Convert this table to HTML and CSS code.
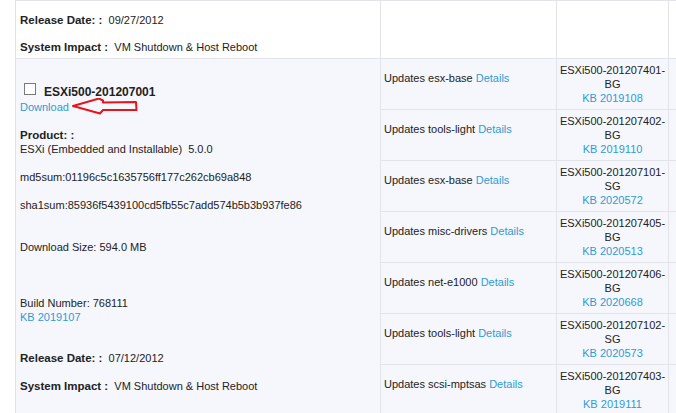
FILE: index.html
```html
<!DOCTYPE html>
<html>
<head>
<meta charset="utf-8">
<link rel="stylesheet" href="styles.css">
</head>
<body>
<table class="grid">
  <colgroup>
    <col class="c1"><col class="c2"><col class="c3"><col class="c4">
  </colgroup>
  <tr class="first">
    <td class="main top">
      <div class="meta"><b>Release Date: :</b>&nbsp; 09/27/2012</div>
      <div class="meta gap"><b>System Impact :</b>&nbsp; VM Shutdown &amp; Host Reboot</div>
    </td>
    <td></td><td></td><td></td>
  </tr>
  <tr class="sub">
    <td class="main bundle" rowspan="7">
      <div class="head"><span class="box"></span><b>ESXi500-201207001</b></div>
      <div class="line"><a href="#">Download</a></div>
      <svg class="arrow" width="80" height="24" viewBox="0 0 80 24"><path d="M2 8 L28 0.5 L32 2.5 L32 4.5 L65 4 L65.5 12 L32 12 L29 15.5 Z" fill="none" stroke="#e8141c" stroke-width="2" stroke-linejoin="round"/></svg>
      <div class="line lab sp1"><b>Product: :</b></div>
      <div class="line">ESXi (Embedded and Installable)&nbsp; 5.0.0</div>
      <div class="line sp2">md5sum:01196c5c1635756ff177c262cb69a848</div>
      <div class="line sp2">sha1sum:85936f5439100cd5fb55c7add574b5b3b937fe86</div>
      <div class="line sp3">Download Size: 594.0 MB</div>
      <div class="line sp4">Build Number: 768111</div>
      <div class="line"><a href="#">KB 2019107</a></div>
      <div class="meta sp5"><b>Release Date: :</b>&nbsp; 07/12/2012</div>
      <div class="meta gap2"><b>System Impact :</b>&nbsp; VM Shutdown &amp; Host Reboot</div>
    </td>
    <td class="upd">Updates esx-base <a href="#">Details</a></td>
    <td class="pid">ESXi500-201207401-<br>BG<br><a href="#">KB 2019108</a></td>
    <td></td>
  </tr>
  <tr class="sub">
    <td class="upd">Updates tools-light <a href="#">Details</a></td>
    <td class="pid">ESXi500-201207402-<br>BG<br><a href="#">KB 2019110</a></td>
    <td></td>
  </tr>
  <tr class="sub">
    <td class="upd">Updates esx-base <a href="#">Details</a></td>
    <td class="pid">ESXi500-201207101-<br>SG<br><a href="#">KB 2020572</a></td>
    <td></td>
  </tr>
  <tr class="sub">
    <td class="upd">Updates misc-drivers <a href="#">Details</a></td>
    <td class="pid">ESXi500-201207405-<br>BG<br><a href="#">KB 2020513</a></td>
    <td></td>
  </tr>
  <tr class="sub">
    <td class="upd">Updates net-e1000 <a href="#">Details</a></td>
    <td class="pid">ESXi500-201207406-<br>BG<br><a href="#">KB 2020668</a></td>
    <td></td>
  </tr>
  <tr class="sub">
    <td class="upd">Updates tools-light <a href="#">Details</a></td>
    <td class="pid">ESXi500-201207102-<br>SG<br><a href="#">KB 2020573</a></td>
    <td></td>
  </tr>
  <tr class="sub">
    <td class="upd">Updates scsi-mptsas <a href="#">Details</a></td>
    <td class="pid">ESXi500-201207403-<br>BG<br><a href="#">KB 2019111</a></td>
    <td></td>
  </tr>
</table>
</body>
</html>
```

FILE: styles.css
```css
html, body {
  margin: 0;
  padding: 0;
  background: #ffffff;
  overflow: hidden;
}
body {
  font-family: "Liberation Sans", Arial, sans-serif;
  font-size: 11px;
  line-height: 14px;
  color: #222222;
}
a {
  color: #2f9bd2;
  text-decoration: none;
}
b {
  font-size: 11.5px;
}
.grid {
  margin-left: 15px;
  border-collapse: collapse;
  table-layout: fixed;
  width: 700px;
  border-top: 1px solid #b9c0cc;
}
.c1 { width: 365px; }
.c2 { width: 176px; }
.c3 { width: 112px; }
.c4 { width: 47px; }
td {
  border: 1px solid #e3e4ea;
  padding: 0;
  vertical-align: top;
}
tr.first {
  height: 58px;
}
tr.first td {
  background: #ffffff;
}
tr.sub {
  height: 51px;
}
tr.sub td {
  background: #f6f7fd;
}
.main {
  padding-left: 4px;
}
.top {
  padding-top: 12px;
}
.meta {
  height: 14px;
  white-space: nowrap;
}
.gap { margin-top: 13px; }
.gap2 { margin-top: 14px; }
.bundle {
  position: relative;
  padding-top: 25px;
}
.head {
  display: flex;
  align-items: center;
  height: 16px;
}
.head b {
  font-size: 12px;
}
.box {
  width: 10px;
  height: 10px;
  border: 1px solid #7a7a7a;
  background: #fff;
  margin-left: 4px;
  margin-right: 8px;
  margin-top: -6px;
}
.line {
  height: 14px;
  white-space: nowrap;
}
.arrow {
  position: absolute;
  left: 55px;
  top: 39px;
}
.sp1 { margin-top: 14px; }
.sp2 { margin-top: 14px; }
.sp3 { margin-top: 28px; }
.sp4 { margin-top: 42px; }
.sp5 { margin-top: 27px; }
.upd {
  padding: 12px 0 0 3px;
  white-space: nowrap;
}
.pid {
  padding-top: 4px;
  text-align: center;
}
```
